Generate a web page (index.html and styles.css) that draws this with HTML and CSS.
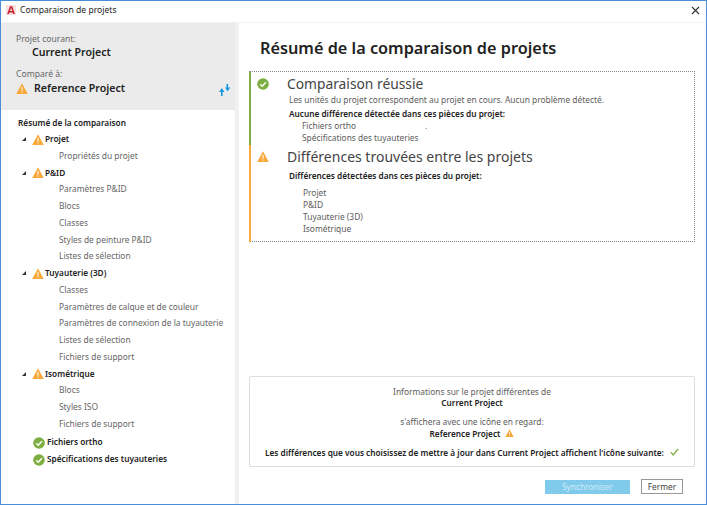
FILE: index.html
```html
<!DOCTYPE html>
<html lang="fr">
<head>
<meta charset="utf-8">
<title>Comparaison de projets</title>
<link rel="stylesheet" href="styles.css">
</head>
<body>
<svg class="defs" width="0" height="0">
  <symbol id="warn" viewBox="0 0 12 11"><path d="M6 .3 11.8 11H.2Z" fill="#f9a83c"/><path d="M5.5 3.8h1v3.9h-1zM5.5 8.5h1v1.1h-1z" fill="#fff"/></symbol>
  <symbol id="ok" viewBox="0 0 12 12"><circle cx="6" cy="6" r="5.8" fill="#7cae42"/><path d="M3.2 6.2 5.2 8.2 8.9 4.2" fill="none" stroke="#fff" stroke-width="1.4"/></symbol>
</svg>
<div class="window">
  <header class="titlebar">
    <svg class="logo" viewBox="0 0 10 10"><rect width="10" height="10" fill="#f8dede"/><path d="M1.2 9 4 1.2h2.2L8.9 9H7.2L6.7 7.4H3.4L2.9 9ZM3.9 6h2.4L5.1 2.8Z" fill="#c8202f"/></svg>
    <span class="title">Comparaison de projets</span>
    <svg class="close" viewBox="0 0 9 9"><path d="M1 1 8 8M8 1 1 8" stroke="#333" stroke-width="1.1" fill="none"/></svg>
  </header>
  <div class="main">
    <aside class="left">
      <section class="summary">
        <div class="lbl">Projet courant:</div>
        <div class="proj proj-cur">Current Project</div>
        <div class="lbl lbl-cmp">Comparé à:</div>
        <div class="proj-row">
          <svg class="ic-warn-lg"><use href="#warn"/></svg>
          <span class="proj">Reference Project</span>
          <svg class="swap" viewBox="0 0 12 12"><path d="M2 12V8H0l2.8-4 2.7 4H3.6v4ZM7.5 0v3.5H6l2.5 4 2.8-4H9.2V0Z" fill="#1b9ae0"/></svg>
        </div>
      </section>
      <nav class="tree">
        <div class="row root">Résumé de la comparaison</div>
        <div class="row grp"><i class="tri"></i><svg class="ic-warn"><use href="#warn"/></svg>Projet</div>
        <div class="row leaf">Propriétés du projet</div>
        <div class="row grp"><i class="tri"></i><svg class="ic-warn"><use href="#warn"/></svg>P&amp;ID</div>
        <div class="row leaf">Paramètres P&amp;ID</div>
        <div class="row leaf">Blocs</div>
        <div class="row leaf">Classes</div>
        <div class="row leaf">Styles de peinture P&amp;ID</div>
        <div class="row leaf">Listes de sélection</div>
        <div class="row grp"><i class="tri"></i><svg class="ic-warn"><use href="#warn"/></svg>Tuyauterie (3D)</div>
        <div class="row leaf">Classes</div>
        <div class="row leaf">Paramètres de calque et de couleur</div>
        <div class="row leaf">Paramètres de connexion de la tuyauterie</div>
        <div class="row leaf">Listes de sélection</div>
        <div class="row leaf">Fichiers de support</div>
        <div class="row grp"><i class="tri"></i><svg class="ic-warn"><use href="#warn"/></svg>Isométrique</div>
        <div class="row leaf">Blocs</div>
        <div class="row leaf">Styles ISO</div>
        <div class="row leaf">Fichiers de support</div>
        <div class="row done done-first"><svg class="ic-ok"><use href="#ok"/></svg>Fichiers ortho</div>
        <div class="row done"><svg class="ic-ok"><use href="#ok"/></svg>Spécifications des tuyauteries</div>
      </nav>
    </aside>
    <main class="right">
      <h1>Résumé de la comparaison de projets</h1>
      <div class="results">
        <section class="res res-ok">
          <div class="res-head"><svg class="res-ic"><use href="#ok"/></svg><h2>Comparaison réussie</h2></div>
          <p class="note">Les unités du projet correspondent au projet en cours. Aucun problème détecté.</p>
          <p class="strong">Aucune différence détectée dans ces pièces du projet:</p>
          <ul class="parts"><li>Fichiers ortho<span class="speck">.</span></li><li>Spécifications des tuyauteries</li></ul>
        </section>
        <section class="res res-warn">
          <div class="res-head"><svg class="res-ic"><use href="#warn"/></svg><h2>Différences trouvées entre les projets</h2></div>
          <p class="strong strong-w">Différences détectées dans ces pièces du projet:</p>
          <ul class="parts parts-w"><li>Projet</li><li>P&amp;ID</li><li>Tuyauterie (3D)</li><li>Isométrique</li></ul>
        </section>
      </div>
      <div class="legend">
        <p>Informations sur le projet différentes de</p>
        <p class="b">Current Project</p>
        <p class="gap">s'affichera avec une icône en regard:</p>
        <p class="b ref">Reference Project <svg class="ic-warn-sm"><use href="#warn"/></svg></p>
        <p class="b last">Les différences que vous choisissez de mettre à jour dans Current Project affichent l'icône suivante: <svg class="tick" viewBox="0 0 9 8"><path d="M.8 4.2 3.2 7 8.2.8" fill="none" stroke="#7cae42" stroke-width="1.3"/></svg></p>
      </div>
      <div class="actions">
        <button class="btn-primary" disabled>Synchroniser</button>
        <button class="btn">Fermer</button>
      </div>
    </main>
  </div>
</div>
</body>
</html>
```
FILE: styles.css
```css
* { box-sizing: border-box; }
html, body { margin: 0; padding: 0; }
body { width: 707px; height: 505px; overflow: hidden; background: #fff; font-family: "Noto Sans", "Open Sans", sans-serif; font-size: 8.4px; color: #5c5c5c; }
.defs { position: absolute; }
p, h1, h2, ul { margin: 0; padding: 0; }
ul { list-style: none; }

.window { width: 707px; height: 505px; border: 1px solid #4a8ed8; display: flex; flex-direction: column; }
.titlebar { height: 22px; flex: none; display: flex; align-items: center; padding: 0 6px 3px 5px; border-bottom: 1px solid #f3f3f3; }
.logo { width: 10px; height: 10px; }
.title { margin-left: 4px; font-size: 8.6px; color: #222; flex: 1; }
.close { width: 9px; height: 9px; }

.main { flex: 1; display: flex; min-height: 0; }
.left { width: 234px; flex: none; display: flex; flex-direction: column; }
.summary { height: 87px; flex: none; background: #ebebeb; padding: 10px 4px 0 15px; }
.lbl { font-size: 8.6px; line-height: 12px; color: #666; }
.proj { font-size: 10.6px; font-weight: 600; color: #222; line-height: 14px; }
.proj-cur { margin: 0 0 0 16px; }
.lbl-cmp { margin-top: 9px; }
.proj-row { display: flex; align-items: center; margin-top: 0; }
.ic-warn-lg { width: 12px; height: 11px; margin-right: 6px; }
.swap { width: 12px; height: 12px; margin: 4px 0 0 auto; }

.tree { padding: 6px 0 0 17px; }
.row { height: 16.75px; line-height: 16.75px; display: flex; align-items: center; white-space: nowrap; }
.row.root { font-weight: 600; color: #222; height: 15px; }
.grp, .done { font-size: 8.25px; }
.root { font-size: 8.25px; }
.grp { font-weight: 600; color: #222; padding-left: 4px; }
.tri { width: 0; height: 0; border-style: solid; border-width: 0 0 4px 4px; border-color: transparent transparent #333 transparent; margin-right: 6px; }
.ic-warn { width: 12px; height: 11px; margin-right: 1px; }
.leaf { padding-left: 41px; color: #666; }
.done { font-weight: 600; color: #222; padding-left: 15px; }
.done-first { margin-top: 1.5px; }
.ic-ok { width: 12px; height: 12px; margin-right: 2px; position: relative; top: 1px; }

.right { flex: 1; min-width: 0; border-left: 4px solid #f0f0f0; padding: 0 11px 0 10px; display: flex; flex-direction: column; }
h1 { font-size: 16.25px; font-weight: 600; color: #222; line-height: 22px; margin: 14px 0 0 11px; }
.results { height: 171px; margin-top: 12px; border: 1px dotted #888; border-left: 0; }
.res { border-left: 2px solid; }
.res-ok { height: 73px; border-color: #7cae42; padding-top: 4px; }
.res-warn { height: 97px; border-color: #f9a83c; padding-top: 4px; }
.res-head { display: flex; align-items: center; height: 15px; }
.res-ic { width: 12px; height: 12px; margin-left: 6px; }
.res-warn .res-ic { height: 11px; }
h2 { font-size: 14px; font-weight: 400; color: #444; margin-left: 18px; white-space: nowrap; }
.res-ok h2 { font-size: 13.8px; }
.note { margin: 3px 0 0 38px; line-height: 12px; }
.strong { margin: 2px 0 0 38px; line-height: 12px; font-weight: 600; color: #222; font-size: 8.25px; }
.strong-w { margin-top: 6px; }
.parts { margin: 0 0 0 51px; line-height: 12px; }
.parts-w { margin: 5px 0 0 52px; }
.speck { margin-left: 69px; }

.legend { margin-top: 134px; height: 91px; border: 1px solid #ddd; border-radius: 2px; text-align: center; padding-top: 9px; line-height: 11px; }
.legend .b { font-weight: 600; color: #222; font-size: 8.25px; }
.gap { margin-top: 8px; }
.legend .ref { margin-top: 0; display: flex; justify-content: center; align-items: center; gap: 5px; height: 12px; }
.ic-warn-sm { width: 9px; height: 8px; }
.legend .last { margin-top: 8px; }
.tick { width: 9px; height: 8px; margin-left: 4px; }

.actions { display: flex; justify-content: flex-end; align-items: center; gap: 11px; margin-top: 12px; padding-right: 12px; }
button { font-family: inherit; font-size: 8.4px; padding: 0; border-radius: 0; }
.btn-primary { width: 85px; height: 14px; background: #80cbec; color: #cfeaf7; border: 0; }
.btn { width: 42px; height: 15px; background: #fff; color: #444; border: 1px solid #999; }
```
